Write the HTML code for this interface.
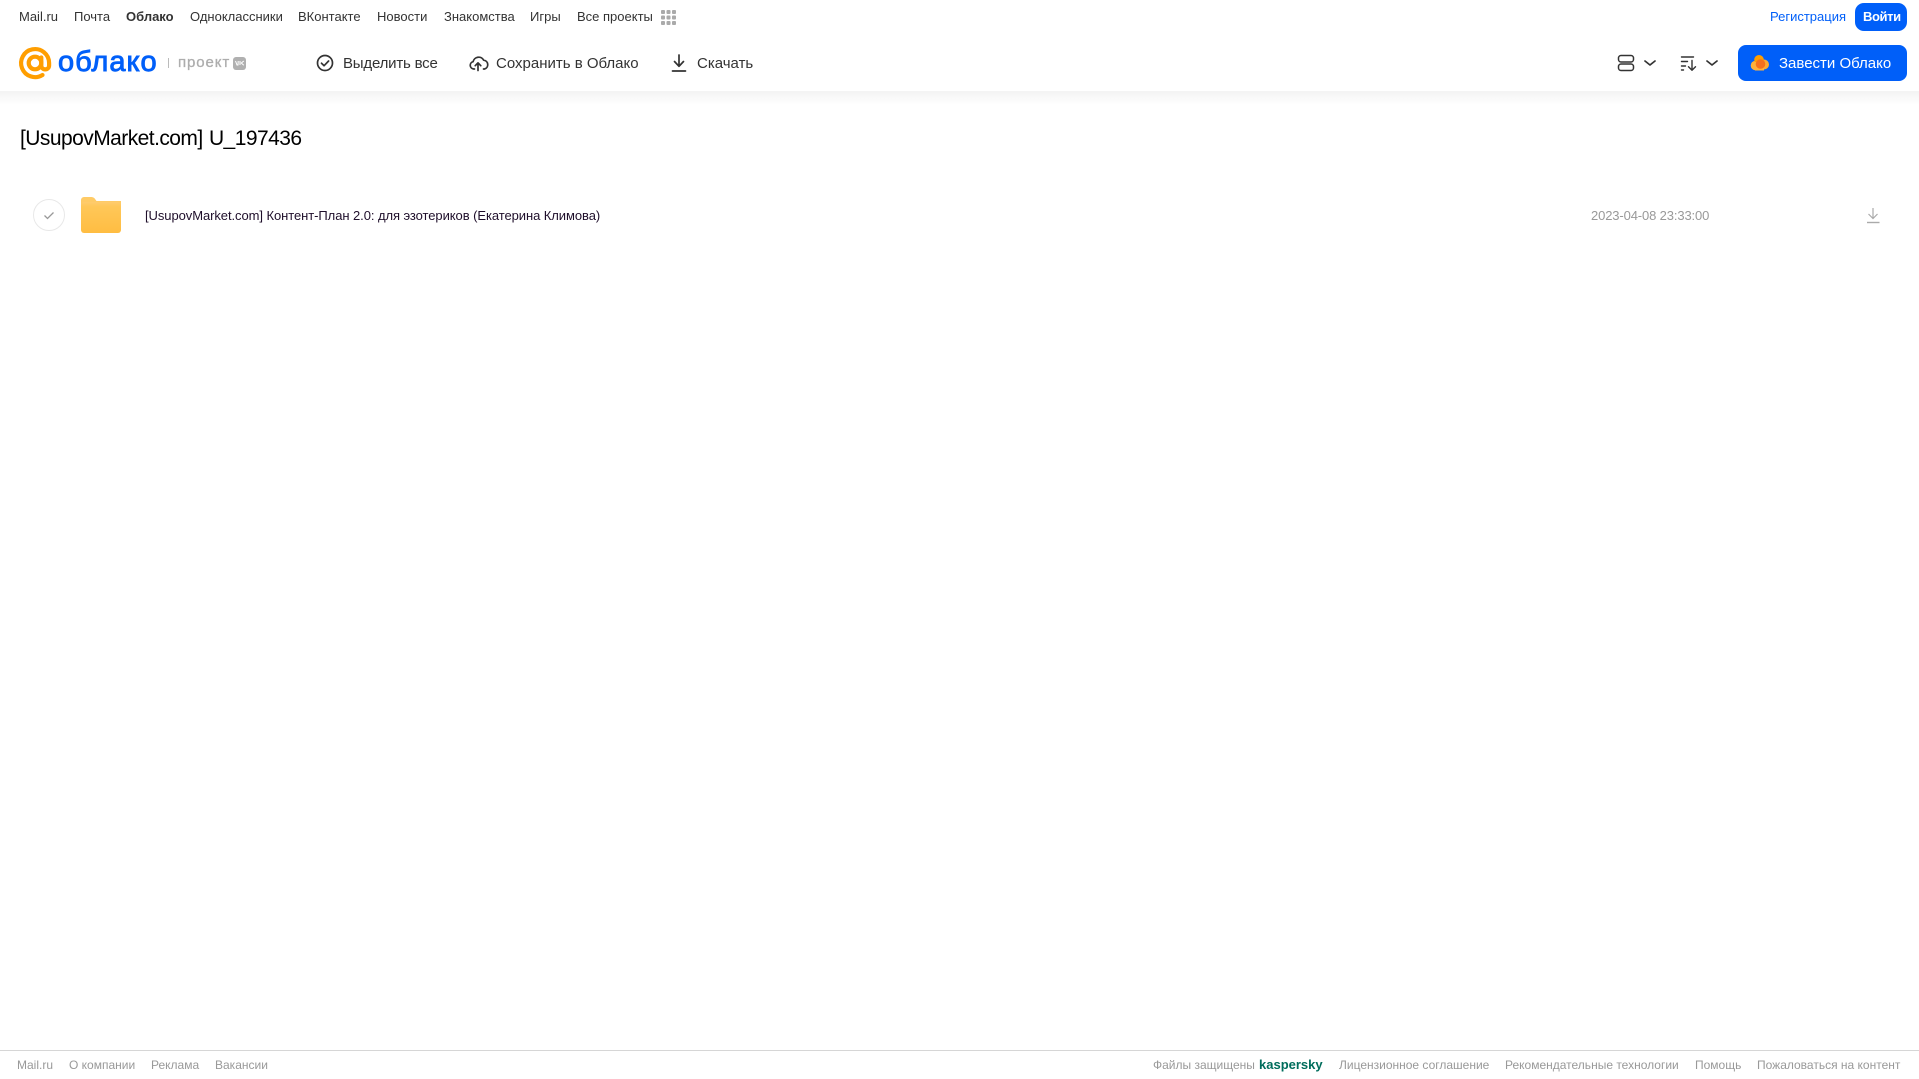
<!DOCTYPE html>
<html lang="ru"><head><meta charset="utf-8"><title>Облако</title>
<style>
html,body{margin:0;padding:0;background:#fff;width:1919px;height:1079px;overflow:hidden}
body{position:relative;font-family:"Liberation Sans",sans-serif}
.t{position:absolute;white-space:nowrap;line-height:20px;height:20px}
.n{top:7px;font-size:13px;color:#333}
.a{top:54px;font-size:15px;color:#333}
.f{top:1055px;font-size:12px;color:#999}
svg{position:absolute;left:0;top:0}
</style></head><body>
<div style="position:absolute;left:0;top:91px;width:1919px;height:14px;background:linear-gradient(#f3f3f3,#fff)"></div>
<div style="position:absolute;left:1855px;top:3px;width:52px;height:28px;background:#005ff9;border-radius:9px"></div>
<div style="position:absolute;left:1738px;top:45px;width:169px;height:36px;background:#005ff9;border-radius:8px"></div>
<div style="position:absolute;left:0;top:1050px;width:1919px;height:1px;background:#d6d6d6"></div>
<svg width="1919" height="1079" viewBox="0 0 1919 1079" fill="none">
<defs><linearGradient id="fg" x1="0" y1="0" x2="0" y2="1"><stop offset="0" stop-color="#ffcc6e"/><stop offset=".15" stop-color="#ffc758"/><stop offset="1" stop-color="#ffbd42"/></linearGradient></defs>
<g stroke="#ff9e00" stroke-width="4.2" stroke-linecap="round"><circle cx="35" cy="63" r="6.300"/><path d="M41.300 57.500v8a3.900 3.900 0 0 0 7.800 0V63A14 14 0 1 0 42.500 75"/></g>
<rect x="168" y="58" width="1" height="10" fill="#bbb"/>
<rect x="233" y="57" width="13" height="13" rx="3" fill="#b0b0b0"/><path d="M235.500 61l1.500 4h1l.2-4M240 61v4M243.800 61l-2.500 2 2.500 2.200" stroke="#fff" stroke-width="1"/>
<g fill="#aaa"><rect x="661" y="10" width="4" height="4" rx="1"/><rect x="666.500" y="10" width="4" height="4" rx="1"/><rect x="672" y="10" width="4" height="4" rx="1"/><rect x="661" y="15.500" width="4" height="4" rx="1"/><rect x="666.500" y="15.500" width="4" height="4" rx="1"/><rect x="672" y="15.500" width="4" height="4" rx="1"/><rect x="661" y="21" width="4" height="4" rx="1"/><rect x="666.500" y="21" width="4" height="4" rx="1"/><rect x="672" y="21" width="4" height="4" rx="1"/></g>
<g stroke="#333" stroke-width="1.700" stroke-linecap="round" stroke-linejoin="round">
<circle cx="325" cy="63" r="7.500"/><path d="M321.500 63.200l2.600 2.500 4.500-4.700"/>
<path d="M474.500 69h-.8a3.700 3.700 0 0 1-.6-7.300 5.700 5.700 0 0 1 10.600-1.500 4.500 4.500 0 0 1 .8 8.800h-1M478 70.500v-7.500M475.200 65.700l2.800-2.800 2.800 2.800"/>
<path d="M679 55v11M674.500 61.500l4.500 4.800 4.500-4.800M672.500 71h13"/>
<rect x="1618.500" y="55.500" width="15" height="6.500" rx="2.500" stroke-width="1.500"/><rect x="1618.500" y="64" width="15" height="6.500" rx="2.500" stroke-width="1.500"/>
<path d="M1645 61l5 4 5-4M1707 61l5 4 5-4"/>
<path d="M1681.500 57h12M1681.500 61.500h6M1681.500 66h4M1681.500 70h2M1692 60.500V70M1688.500 66.800l3.500 3.500 3.500-3.500" stroke-width="1.400"/>
</g>
<circle cx="1755.500" cy="65.500" r="4.800" fill="#ffb03a"/><circle cx="1764" cy="64.500" r="5" fill="#ffa930"/><circle cx="1759" cy="59.800" r="4.800" fill="#ff9e00"/><rect x="1755" y="62" width="9" height="8.500" fill="#ffb03a"/><circle cx="1760.500" cy="64" r="4.800" fill="#f5701e"/>
<circle cx="49" cy="215" r="15.500" stroke="#e8e8e8" stroke-width="1" fill="#fff"/><path d="M44.500 215.500l3 3 6-6" stroke="#999" stroke-width="1.300"/>
<path d="M81 200a3 3 0 0 1 3-3h7.500a4 4 0 0 1 3 1.300l2 2.700H121v6H81z" fill="#ffcb66"/><path d="M81 205a3 3 0 0 1 3-3h34a3 3 0 0 1 3 3v25a3 3 0 0 1-3 3H84a3 3 0 0 1-3-3z" fill="url(#fg)"/>
<path d="M1873 208v10.500M1868.500 214l4.500 4.500 4.500-4.500" stroke="#aaa" stroke-width="1.200"/><path d="M1867 222.500h12.500" stroke="#aaa" stroke-width="1.400"/>
</svg>
<span class="t n" style="left:19px">Mail.ru</span>
<span class="t n" style="left:74px">Почта</span>
<span class="t n" style="left:126px;font-weight:bold">Облако</span>
<span class="t n" style="left:190px">Одноклассники</span>
<span class="t n" style="left:298px">ВКонтакте</span>
<span class="t n" style="left:377px">Новости</span>
<span class="t n" style="left:444px">Знакомства</span>
<span class="t n" style="left:530px">Игры</span>
<span class="t n" style="left:577px">Все проекты</span>
<span class="t n" style="left:1770px;color:#005ff9">Регистрация</span>
<span class="t n" style="left:1863px;color:#fff;font-weight:bold;letter-spacing:-.4px">Войти</span>
<span class="t" style="left:58px;top:45px;height:34px;line-height:34px;font-size:29px;color:#005ff9;letter-spacing:1px;-webkit-text-stroke:.9px #005ff9">облако</span>
<span class="t" style="left:178px;top:53px;font-size:15px;color:#adadad;letter-spacing:.9px;-webkit-text-stroke:.3px #adadad">проект</span>
<span class="t a" style="left:343px;letter-spacing:-.2px">Выделить все</span>
<span class="t a" style="left:496px">Сохранить в Облако</span>
<span class="t a" style="left:697px">Скачать</span>
<span class="t a" style="left:1779px;color:#fff">Завести Облако</span>
<span class="t" style="left:20px;top:128.500px;font-size:21px;color:#000;letter-spacing:-.55px;word-spacing:1px">[UsupovMarket.com] U_197436</span>
<span class="t" style="left:145px;top:206px;font-size:13px;color:#1f0f2b;letter-spacing:-.07px">[UsupovMarket.com] Контент-План 2.0: для эзотериков (Екатерина Климова)</span>
<span class="t" style="left:1591px;top:206px;font-size:13px;color:#999;letter-spacing:-.13px">2023-04-08 23:33:00</span>
<span class="t f" style="left:17px">Mail.ru</span>
<span class="t f" style="left:69px">О компании</span>
<span class="t f" style="left:151px">Реклама</span>
<span class="t f" style="left:215px">Вакансии</span>
<span class="t f" style="left:1153px">Файлы защищены</span>
<span class="t f" style="left:1259px;font-size:13px;font-weight:bold;color:#006d5c">kaspersky</span>
<span class="t f" style="left:1339px">Лицензионное соглашение</span>
<span class="t f" style="left:1505px">Рекомендательные технологии</span>
<span class="t f" style="left:1695px">Помощь</span>
<span class="t f" style="left:1757px">Пожаловаться на контент</span>
</body></html>
